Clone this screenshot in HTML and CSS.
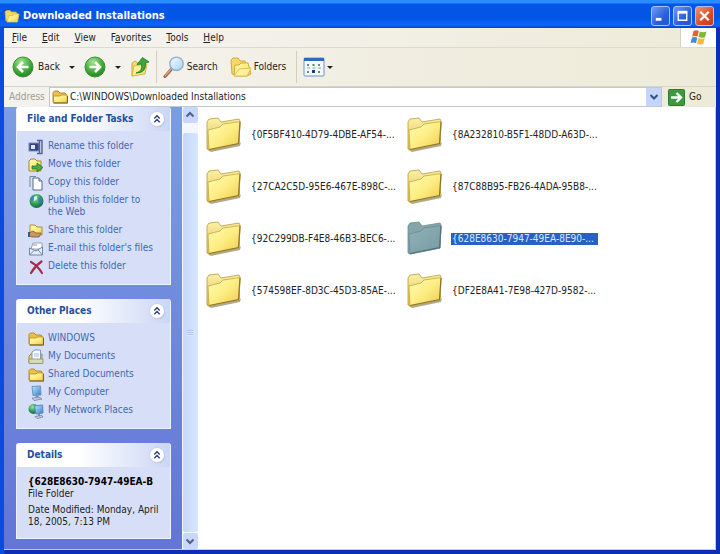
FILE: index.html
```html
<!DOCTYPE html>
<html lang="en">
<head>
<meta charset="utf-8">
<title>Downloaded Installations</title>
<link rel="stylesheet" href="styles.css">
</head>
<body>
<svg class="defs" aria-hidden="true">
  <defs>
    <linearGradient id="gFront" x1="0" y1="0" x2="1" y2="1"><stop offset="0" stop-color="#fffbb4"/><stop offset=".5" stop-color="#fdee84"/><stop offset="1" stop-color="#eecb4c"/></linearGradient>
    <linearGradient id="gBack" x1="0" y1="0" x2="0" y2="1"><stop offset="0" stop-color="#fbf0a4"/><stop offset="1" stop-color="#dfbf50"/></linearGradient>
    <linearGradient id="gSel" x1="0" y1="0" x2="1" y2="1"><stop offset="0" stop-color="#8fb0b4"/><stop offset="1" stop-color="#789ca6"/></linearGradient>
    <radialGradient id="gGreen" cx=".4" cy=".25" r=".8"><stop offset="0" stop-color="#a4e394"/><stop offset=".5" stop-color="#4db541"/><stop offset="1" stop-color="#1e8020"/></radialGradient>
    <linearGradient id="gLens" x1="0" y1="0" x2="1" y2="1"><stop offset="0" stop-color="#f4fbff"/><stop offset="1" stop-color="#a5d3f0"/></linearGradient>
    <radialGradient id="gGlobe" cx=".4" cy=".3" r=".8"><stop offset="0" stop-color="#9fe8b0"/><stop offset=".5" stop-color="#2f9f52"/><stop offset="1" stop-color="#125a48"/></radialGradient>
    <linearGradient id="gScreen" x1="0" y1="0" x2="1" y2="1"><stop offset="0" stop-color="#b8ecff"/><stop offset="1" stop-color="#2f7fd0"/></linearGradient>
  </defs>
  <symbol id="folder-large" viewBox="0 0 36 36">
    <path d="M2 33 L33 27 L35 25 L34 29 L5 35Z" fill="#6b6238" opacity=".55"/>
    <path d="M1 32 V5 L3 2 L12 1 L15 5 L33 2 L34 4 L33 27 L3 33Z" fill="url(#gBack)" stroke="#b59b3f" stroke-width=".8"/>
    <path d="M2 13 L14 10 L17 7 L34 4.500 L33 27 L3 33Z" fill="url(#gFront)" stroke="#c4a640" stroke-width=".8"/>
    <path d="M3 32.500 L32.500 26.500 L34 5" fill="none" stroke="#8d7630" stroke-width="1.200"/>
  </symbol>
  <symbol id="folder-selected" viewBox="0 0 36 36">
    <path d="M1 32 V5 L3 2 L12 1 L15 5 L33 2 L34 4 L33 27 L3 33Z" fill="#86a5a8" stroke="#6d8c90" stroke-width=".8"/>
    <path d="M2 13 L14 10 L17 7 L34 4.500 L33 27 L3 33Z" fill="url(#gSel)" stroke="#6b8d94" stroke-width=".8"/>
    <path d="M3 32.500 L32.500 26.500 L34 5" fill="none" stroke="#54727c" stroke-width="1.200"/>
  </symbol>
  <symbol id="folder" viewBox="0 0 16 16">
    <path d="M1 13 V3.500 L2.500 2 H6 L8 4 H13 L14 5 V13Z" fill="#e8c24a" stroke="#b58a25"/>
    <path d="M1.500 13.500 L1.500 7 H8 L9 6 H15.200 V13.500Z" fill="url(#gFront)" stroke="#b58a25" stroke-width=".8"/>
    <path d="M1.500 14.200 H15.500 V7" fill="none" stroke="#6d5a24" stroke-width=".9"/>
  </symbol>
  <symbol id="folder-title" viewBox="0 0 16 16">
    <path d="M2 13 L1 4 L2.500 2.500 H6 L7.500 4 H12 L13 5.500 V13Z" fill="#f3d765" stroke="#d6ab3a" stroke-width=".8"/>
    <path d="M3 14 L5 7.500 H9 L10 6 H15 L13.500 14Z" fill="url(#gFront)" stroke="#e3c04d" stroke-width=".8"/>
  </symbol>
  <symbol id="folder-open" viewBox="0 0 22 20">
    <path d="M2 17 L1 3 L3 1 L8 1 L10 4 L15 4 L16 7 L16 17Z" fill="#f5d867" stroke="#d3a93b"/>
    <path d="M4 19 L5 8 L9 8 L11 6 L18 6 L21 17 L17 19Z" fill="url(#gFront)" stroke="#d3a93b"/>
    <path d="M4 19 L9 12 L21 11 L17 19Z" fill="#fff29b" stroke="#d8b347" stroke-width=".8"/>
  </symbol>
  <symbol id="chevrons" viewBox="0 0 18 18">
    <circle cx="9.500" cy="9.800" r="7.500" fill="#8f9bc4" opacity=".6"/>
    <circle cx="9" cy="9" r="7.500" fill="#fff" stroke="#c3cbe6" stroke-width=".8"/>
    <path d="M6.300 8.500 L9 5.800 L11.700 8.500 M6.300 12.200 L9 9.500 L11.700 12.200" fill="none" stroke="#2c3f72" stroke-width="1.400"/>
  </symbol>
</svg>

<div class="window">
  <header class="titlebar">
    <svg class="icon16"><use href="#folder-title"/></svg>
    <h1 class="title">Downloaded Installations</h1>
    <div class="window-buttons">
      <button class="wbtn" type="button" aria-label="Minimize"><svg viewBox="0 0 18 18"><path d="M4 12.500 H10" stroke="#fff" stroke-width="3"/></svg></button>
      <button class="wbtn" type="button" aria-label="Maximize"><svg viewBox="0 0 18 18"><path d="M4.500 5 H13.500 V13.500 H4.500Z" fill="none" stroke="#fff" stroke-width="1.400"/><path d="M4 5 H14" stroke="#fff" stroke-width="3"/></svg></button>
      <button class="wbtn close" type="button" aria-label="Close"><svg viewBox="0 0 18 18"><path d="M4.500 4.500 L13.500 13.500 M13.500 4.500 L4.500 13.500" stroke="#fff" stroke-width="2.400"/></svg></button>
    </div>
  </header>

  <div class="frame">
    <nav class="menubar">
      <button type="button"><u>F</u>ile</button>
      <button type="button"><u>E</u>dit</button>
      <button type="button"><u>V</u>iew</button>
      <button type="button">F<u>a</u>vorites</button>
      <button type="button"><u>T</u>ools</button>
      <button type="button"><u>H</u>elp</button>
      <div class="flag">
        <svg viewBox="0 0 18 17">
          <path d="M3.500 2 Q6 .5 8.800 2 L7.500 7.600 Q5 6.300 2.200 7.500Z" fill="#e4632c"/>
          <path d="M9.800 2.400 Q13 4 16.500 2.500 L15 8.200 Q12 9.400 8.500 8Z" fill="#7db83c"/>
          <path d="M2 8.600 Q4.800 7.300 7.300 8.700 L6 14.200 Q3.500 12.800 .6 14Z" fill="#4a86dc"/>
          <path d="M8.300 9.100 Q11.500 10.400 14.700 9.300 L13.300 15 Q10.500 16.200 7 14.700Z" fill="#f3bd2e"/>
        </svg>
      </div>
    </nav>

    <div class="toolbar">
      <button class="tool back" type="button">
        <svg class="icon22" viewBox="0 0 22 22"><circle cx="11" cy="11" r="10" fill="url(#gGreen)" stroke="#3e8c3a"/><path d="M16.500 11 H6.500 M11 6 L6 11 L11 16" fill="none" stroke="#fff" stroke-width="2.600"/></svg>
        <span>Back</span>
      </button>
      <button class="arrow" type="button" aria-label="Back history"></button>
      <button class="tool forward" type="button" aria-label="Forward">
        <svg class="icon22" viewBox="0 0 22 22"><circle cx="11" cy="11" r="10" fill="url(#gGreen)" stroke="#3e8c3a"/><path d="M5.500 11 H15.500 M11 6 L16 11 L11 16" fill="none" stroke="#fff" stroke-width="2.600"/></svg>
      </button>
      <button class="arrow" type="button" aria-label="Forward history"></button>
      <button class="tool up" type="button" aria-label="Up">
        <svg class="icon22" viewBox="0 0 22 22"><path d="M2 20 V7 L5 5 L8 7 H15 V17Z" fill="#f3dc6a" stroke="#cda83e"/><path d="M2 20 L4 10 L17 8 L15 18Z" fill="url(#gFront)" stroke="#d3af45" stroke-width=".8"/><path d="M6 17 Q13 15 11.500 8 L7 8.500 L12.500 1.500 L19 6 L15.500 7 Q16.500 17 6 17Z" fill="#3fa53a" stroke="#237a2a" stroke-width=".8"/></svg>
      </button>
      <span class="divider"></span>
      <button class="tool search" type="button">
        <svg class="icon22" viewBox="0 0 22 22"><path d="M2 20.500 L9 12.500" stroke="#a76952" stroke-width="3.200" stroke-linecap="round"/><path d="M2 19.800 L8.500 12.500" stroke="#dba890" stroke-width="1.200"/><circle cx="13.500" cy="7.800" r="6.700" fill="url(#gLens)" stroke="#8fb0d0" stroke-width="1.400"/></svg>
        <span>Search</span>
      </button>
      <button class="tool folders" type="button">
        <svg class="icon22" viewBox="0 0 22 20"><use href="#folder-open"/></svg>
        <span>Folders</span>
      </button>
      <span class="divider"></span>
      <button class="tool views" type="button" aria-label="Views">
        <svg class="icon22" viewBox="0 0 22 20"><rect x="1" y="1" width="20" height="18" rx="1" fill="#f4f8ff" stroke="#6d94cc"/><path d="M1 1 H21 V4 H1Z" fill="#3568b8"/><path d="M4 7h2v2H4zM4 14h2v2H4zM15 7h2v2h-2z" fill="#6a8c78"/><path d="M9.500 7h2v2h-2zM15 14h2v2h-2z" fill="#4a9a40"/><path d="M9 13h3v3h-3z" fill="#243c70"/><path d="M4 11h3M9.500 11h3M15 11h3" stroke="#8aa2cc"/></svg>
      </button>
      <button class="arrow tight" type="button" aria-label="View options"></button>
    </div>

    <form class="addressbar">
      <label for="address">Address</label>
      <div class="address-box">
        <svg class="icon16"><use href="#folder"/></svg>
        <input id="address" type="text" value="C:\WINDOWS\Downloaded Installations">
        <button class="drop" type="button" aria-label="Address list"><svg viewBox="0 0 10 10"><path d="M1.500 3 L5 6.500 L8.500 3" fill="none" stroke="#34508c" stroke-width="2"/></svg></button>
      </div>
      <button class="go" type="button">
        <svg class="icon17" viewBox="0 0 17 17"><rect x=".5" y=".5" width="16" height="16" rx="1" fill="#3b9a3e" stroke="#2a7a31"/><path d="M3 8.500 H12 M8.500 4 L13 8.500 L8.500 13" fill="none" stroke="#fff" stroke-width="2.400"/></svg>
        <span>Go</span>
      </button>
    </form>

    <div class="content">
      <aside class="sidebar">
        <section class="panel first">
          <div class="panel-head"><h2>File and Folder Tasks</h2><button type="button" aria-label="Collapse tasks"><svg><use href="#chevrons"/></svg></button></div>
          <ul>
            <li><svg class="icon16" viewBox="0 0 16 16"><rect x="1" y="4" width="10" height="8" fill="#31457e" stroke="#7f8db8"/><rect x="3" y="6" width="4" height="4" fill="#dfe6fa"/><path d="M9 1.500 H14 V14.500 H9 M11.500 2 V14" fill="none" stroke="#56618f" stroke-width="1.400"/></svg><a href="#">Rename this folder</a></li>
            <li><svg class="icon16" viewBox="0 0 16 16"><path d="M1 14 V4 L3 2 H7 L9 4 H13 V14Z" fill="url(#gFront)" stroke="#a98529"/><path d="M4 9 H9 V6 L15 10.500 L9 15 V12 H4Z" fill="#49ad3d" stroke="#23732a" stroke-width=".8"/></svg><a href="#">Move this folder</a></li>
            <li><svg class="icon16" viewBox="0 0 16 16"><path d="M2 12 V1.500 H8" fill="none" stroke="#7188a8"/><path d="M5 3 H11 L14 6 V15 H5Z" fill="#fff" stroke="#536b86"/><path d="M11 3 V6 H14" fill="#c9dcf3" stroke="#536b86"/></svg><a href="#">Copy this folder</a></li>
            <li><svg class="icon16" viewBox="0 0 16 16"><circle cx="8.500" cy="8" r="7" fill="url(#gGlobe)"/><path d="M2 6 Q4 2 7 2 L6 6 L4 9Z M10 4 Q15 6 14.500 10 L11 11Z" fill="#3974c4" opacity=".75"/><path d="M6 4 L9 3 L9 6 L6 8Z" fill="#d8ffd8"/></svg><a href="#">Publish this folder to the Web</a></li>
            <li><svg class="icon16" viewBox="0 0 16 16"><path d="M2 11 V2 H7 L9 4 H14 V12Z" fill="url(#gFront)" stroke="#b08c35"/><path d="M1 10 L5 8 L8 10 L13 10 L11 14 H4 L1 13Z" fill="#c99760" stroke="#76553c" stroke-width=".8"/><path d="M1 9 V14" stroke="#385a86" stroke-width="2"/></svg><a href="#">Share this folder</a></li>
            <li><svg class="icon16" viewBox="0 0 16 16"><path d="M3 8 L5 2 H14 L14 8Z" fill="#fff" stroke="#92a2bf"/><path d="M1.500 7 L8 10 L14.500 6 V14 H1.500Z" fill="#e4ecf8" stroke="#7186a8"/><path d="M1.500 14 L6 9.500 M14.500 14 L10 9" stroke="#7186a8"/><path d="M5 4 H9" stroke="#cc8270"/></svg><a href="#">E-mail this folder's files</a></li>
            <li><svg class="icon16" viewBox="0 0 16 16"><path d="M3 3 Q9 6 14 14 M13.500 2.500 Q7 7 3 14" fill="none" stroke="#a92c4b" stroke-width="2.200" stroke-linecap="round"/></svg><a href="#">Delete this folder</a></li>
          </ul>
        </section>

        <section class="panel">
          <div class="panel-head"><h2>Other Places</h2><button type="button" aria-label="Collapse places"><svg><use href="#chevrons"/></svg></button></div>
          <ul>
            <li><svg class="icon16"><use href="#folder"/></svg><a href="#">WINDOWS</a></li>
            <li><svg class="icon16" viewBox="0 0 16 16"><path d="M1 14 V7 L3 5 H14 V14Z" fill="#ecd06a" stroke="#a08a48"/><path d="M4 12 V3 L7 1 H12.500 V12Z" fill="#f8fbff" stroke="#8399b8"/><path d="M6 5 H11 M6 7 H11" stroke="#a7c0e0"/><path d="M1 14.500 V10 H15 V14.500Z" fill="#d7dcae" stroke="#8d8f68" stroke-width=".8"/></svg><a href="#">My Documents</a></li>
            <li><svg class="icon16"><use href="#folder"/></svg><a href="#">Shared Documents</a></li>
            <li><svg class="icon16" viewBox="0 0 16 16"><path d="M4 1.500 L12.500 1 L13 10 L5 10.500Z" fill="url(#gScreen)" stroke="#7493bd"/><path d="M9 10.500 V12.500" stroke="#7d8cab" stroke-width="3"/><path d="M4 13 L12 12.500 L14 14 L6 15.500Z" fill="#cdd5e6" stroke="#6f7fa4" stroke-width=".8"/></svg><a href="#">My Computer</a></li>
            <li><svg class="icon16" viewBox="0 0 16 16"><circle cx="5.500" cy="6" r="5" fill="url(#gGlobe)"/><path d="M6.500 3 L14.500 2 L15 10 L8 11Z" fill="url(#gScreen)" stroke="#6785b5"/><path d="M11 11 V13" stroke="#7d8cab" stroke-width="2"/><path d="M7 13.500 L14 12.500 L15 14 L9 15.500Z" fill="#cdd5e6" stroke="#6f7fa4" stroke-width=".8"/></svg><a href="#">My Network Places</a></li>
          </ul>
        </section>

        <section class="panel">
          <div class="panel-head"><h2>Details</h2><button type="button" aria-label="Collapse details"><svg><use href="#chevrons"/></svg></button></div>
          <div class="details">
            <p><strong>{628E8630-7947-49EA-B</strong><br>File Folder</p>
            <p>Date Modified: Monday, April 18, 2005, 7:13 PM</p>
          </div>
        </section>
      </aside>

      <div class="scrollbar">
        <button type="button" aria-label="Scroll up"><svg viewBox="0 0 10 10"><path d="M1.500 6.500 L5 3 L8.500 6.500" fill="none" stroke="#4d6185" stroke-width="2"/></svg></button>
        <div class="thumb"><span class="grip"></span></div>
        <button type="button" aria-label="Scroll down"><svg viewBox="0 0 10 10"><path d="M1.500 3.500 L5 7 L8.500 3.500" fill="none" stroke="#4d6185" stroke-width="2"/></svg></button>
      </div>

      <main class="files">
        <div class="file"><svg><use href="#folder-large"/></svg><span>{0F5BF410-4D79-4DBE-AF54-...</span></div>
        <div class="file"><svg><use href="#folder-large"/></svg><span>{8A232810-B5F1-48DD-A63D-...</span></div>
        <div class="file"><svg><use href="#folder-large"/></svg><span>{27CA2C5D-95E6-467E-898C-...</span></div>
        <div class="file"><svg><use href="#folder-large"/></svg><span>{87C88B95-FB26-4ADA-95B8-...</span></div>
        <div class="file"><svg><use href="#folder-large"/></svg><span>{92C299DB-F4E8-46B3-BEC6-...</span></div>
        <div class="file selected"><svg><use href="#folder-selected"/></svg><span>{628E8630-7947-49EA-8E90-...</span></div>
        <div class="file"><svg><use href="#folder-large"/></svg><span>{574598EF-8D3C-45D3-85AE-...</span></div>
        <div class="file"><svg><use href="#folder-large"/></svg><span>{DF2E8A41-7E98-427D-9582-...</span></div>
      </main>
    </div>
  </div>
</div>
</body>
</html>
```
FILE: styles.css
```css
* { box-sizing: border-box; }

body {
  margin: 0;
  font-family: "DejaVu Sans Condensed", "DejaVu Sans", sans-serif;
  font-size: 10px;
  line-height: 12px;
  color: #222;
}

button, input {
  font: inherit;
  color: inherit;
  background: none;
  border: 0;
  padding: 0;
  margin: 0;
}

h1, h2, p, ul { margin: 0; padding: 0; }
ul { list-style: none; }
svg { display: block; flex: none; }

.defs { position: absolute; width: 0; height: 0; }
.icon16 { width: 16px; height: 16px; }
.icon17 { width: 17px; height: 17px; }
.icon22 { width: 22px; height: 22px; }

.window {
  display: flex;
  flex-direction: column;
  min-height: 100vh;
  background: linear-gradient(90deg, #0a4ce0 0, #0a4ce0 4px, #0b2fb4 5px);
}

.titlebar {
  display: flex;
  align-items: center;
  height: 28px;
  padding: 3px 6px 0 4px;
  gap: 3px;
  background: linear-gradient(#2a8cff 0, #2a8cff 3px, #0356e8 4px, #0355e4 18px, #0a66fc 25px, #0a4fd8 27px, #0a3cb8 28px);
}

.title {
  flex: 1;
  font-size: 11px;
  line-height: 14px;
  color: #fff;
}

.window-buttons { display: flex; gap: 3px; }

.wbtn {
  width: 19px;
  height: 20px;
  border: 1px solid #a9c3f6;
  border-radius: 3px;
  background: linear-gradient(135deg, #6f9bf4, #2a5fdc 60%, #2455cc);
}
.wbtn.close { background: linear-gradient(135deg, #ee9475, #d94c26 60%, #c23c1c); }
.wbtn svg { width: 100%; height: 100%; }

.frame {
  flex: 1;
  display: flex;
  flex-direction: column;
  margin: 0 4px 4px;
  background: #efeddf;
}

.menubar {
  display: flex;
  align-items: center;
  height: 20px;
  padding-left: 8px;
  gap: 15px;
  background: linear-gradient(90deg, #f5f4f2, #f2efe6 50%, #edebd8);
  border-bottom: 1px solid #dedbcb;
}

.flag {
  display: flex;
  align-items: center;
  justify-content: center;
  align-self: stretch;
  width: 36px;
  margin-left: auto;
  background: #fff;
  border-left: 1px solid #d5d2c2;
}
.flag svg { width: 18px; height: 17px; }

.toolbar {
  display: flex;
  align-items: center;
  height: 39px;
  padding-left: 8px;
  background: linear-gradient(90deg, #f5f4f1, #f1eee2 50%, #edebd8);
  border-bottom: 1px solid #d8d5c5;
}

.tool { display: flex; align-items: center; gap: 2px; }
.back { gap: 4px; }
.search { margin-left: 6px; }
.folders { margin-left: 12px; }
.views { margin-left: 6px; }

.arrow {
  width: 24px;
  height: 22px;
  display: flex;
  align-items: center;
  justify-content: center;
}
.arrow::before {
  content: "";
  border: 3px solid transparent;
  border-top-color: #222;
  border-bottom: 0;
}
.arrow.tight { width: 10px; }
.up { margin-right: 4px; }

.divider {
  width: 1px;
  height: 32px;
  background: #d2cfbf;
}
.folders + .divider { margin-left: 10px; }

.addressbar {
  display: flex;
  align-items: center;
  height: 20px;
  padding-left: 5px;
  background: linear-gradient(90deg, #f3f2ee, #edebd8);
}
.addressbar label { width: 40px; color: #a09e96; }

.address-box {
  flex: 1;
  display: flex;
  align-items: center;
  height: 20px;
  padding-left: 2px;
  gap: 2px;
  background: #fff;
  border: 1px solid #c0c8d4;
}
.address-box input { flex: 1; min-width: 0; outline: 0; }

.drop {
  width: 15px;
  height: 18px;
  display: flex;
  align-items: center;
  justify-content: center;
  background: #c5d5fb;
}
.drop svg { width: 10px; height: 10px; }

.go {
  display: flex;
  align-items: center;
  width: 54px;
  padding-left: 6px;
  gap: 4px;
}

.content {
  flex: 1;
  display: flex;
  background: #fff;
  border-right: 1px solid #b8cdf6;
  border-bottom: 1px solid #b8cdf6;
}

.sidebar {
  width: 178px;
  padding: 0 11px 10px 12px;
  display: flex;
  flex-direction: column;
  gap: 14px;
  background: linear-gradient(#7b9de4, #6375d6);
}

.panel {
  background: #d7dff8;
  border: 1px solid #eef2fe;
  border-top: 0;
  border-radius: 3px 3px 0 0;
}

.panel-head {
  display: flex;
  align-items: center;
  justify-content: space-between;
  height: 24px;
  padding: 0 4px 0 10px;
  background: linear-gradient(90deg, #fff 40%, #cad6f6);
  border-radius: 3px 3px 0 0;
}
.first .panel-head { border-radius: 0; }
.panel-head h2 {
  font-size: 10px;
  line-height: 12px;
  color: #24509c;
}
.panel-head svg { width: 18px; height: 18px; }

.panel ul {
  display: grid;
  gap: 6px;
  padding: 9px 14px 12px 11px;
}
.panel li { display: flex; gap: 4px; }
.panel li svg { margin: -1px 0 -3px; }
.panel a { color: #4168b4; text-decoration: none; }

.details {
  display: grid;
  gap: 4px;
  padding: 9px 6px 10px 11px;
}
.details strong { color: #000; }

.scrollbar {
  width: 16px;
  display: flex;
  flex-direction: column;
  align-items: center;
  background: #f4f7fd;
}
.scrollbar button {
  width: 15px;
  height: 16px;
  display: flex;
  align-items: center;
  justify-content: center;
  background: #c9d8fa;
  border-radius: 2px;
}
.scrollbar button svg { width: 10px; height: 10px; }

.thumb {
  flex: 1;
  width: 15px;
  margin: 10px 0 1px;
  display: flex;
  align-items: center;
  justify-content: center;
  background: linear-gradient(90deg, #c6d8f8, #d6e6fd);
  border-radius: 2px;
}
.grip {
  width: 6px;
  height: 6px;
  background: repeating-linear-gradient(#b0c6ee 0 1px, #dbe8fd 1px 2px);
}

.files {
  flex: 1;
  display: grid;
  grid-template-columns: repeat(auto-fill, 201px);
  grid-auto-rows: 52px;
  align-content: start;
  padding: 2px 0 0 8px;
}

.file { display: flex; align-items: center; gap: 8px; white-space: nowrap; }
.file svg { width: 36px; height: 36px; }
.file span { padding: 0 4px 0 1px; }
.selected span { background: #2a5fc4; color: #dbe8ff; }
```
